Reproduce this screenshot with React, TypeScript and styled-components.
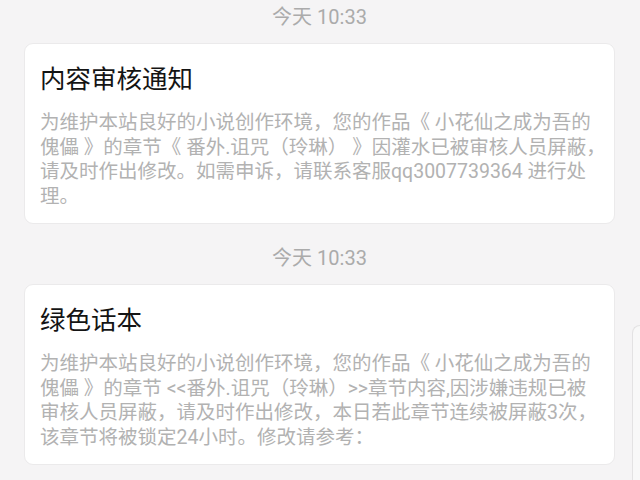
import React from 'react';
import styled, { createGlobalStyle } from 'styled-components';

const GlobalStyle = createGlobalStyle`
  html, body {
    margin: 0;
    padding: 0;
    background: #f5f4f5;
  }
  body {
    font-family: Roboto, 'Noto Sans CJK SC', sans-serif;
    width: 640px;
    height: 480px;
    overflow: hidden;
  }
`;

const Page = styled.div`
  position: relative;
  display: flex;
  flex-direction: column;
  padding: 4px 25px 0 24px;
  height: 480px;
  box-sizing: border-box;
`;

const TimeStamp = styled.div`
  text-align: center;
  font-size: 20px;
  line-height: 26px;
  color: #ababab;
  margin-bottom: 13px;
`;

const Card = styled.div`
  background: #fff;
  border: 1px solid #ebeaeb;
  border-radius: 9px;
  padding: 21px 15px 14px 15px;
  margin-bottom: 21px;
`;

const Title = styled.div`
  font-size: 25.5px;
  line-height: 28px;
  color: #141414;
  margin-bottom: 18px;
`;

const Body = styled.div`
  font-size: 19.5px;
  line-height: 24.5px;
  color: #b2b2b2;
  white-space: nowrap;
`;

const ScrollEdge = styled.div`
  position: absolute;
  right: 0;
  top: 325px;
  bottom: 0;
  width: 7px;
  border-left: 1px solid #e3e2e3;
  border-top: 1px solid #e3e2e3;
  border-top-left-radius: 8px;
  background: #f8f8f8;
`;

type Notice = {
  time: string;
  title: string;
  lines: string[];
};

const notices: Notice[] = [
  {
    time: '今天 10:33',
    title: '内容审核通知',
    lines: [
      '为维护本站良好的小说创作环境，您的作品《 小花仙之成为吾的',
      '傀儡 》的章节《 番外.诅咒（玲琳） 》因灌水已被审核人员屏蔽，',
      '请及时作出修改。如需申诉，请联系客服qq3007739364 进行处',
      '理。',
    ],
  },
  {
    time: '今天 10:33',
    title: '绿色话本',
    lines: [
      '为维护本站良好的小说创作环境，您的作品《 小花仙之成为吾的',
      '傀儡 》的章节 <<番外.诅咒（玲琳）>>章节内容,因涉嫌违规已被',
      '审核人员屏蔽，请及时作出修改，本日若此章节连续被屏蔽3次，',
      '该章节将被锁定24小时。修改请参考：',
    ],
  },
];

export default function App() {
  return (
    <>
      <GlobalStyle />
      <Page>
        {notices.map((n, i) => (
          <React.Fragment key={i}>
            <TimeStamp>{n.time}</TimeStamp>
            <Card>
              <Title>{n.title}</Title>
              <Body>
                {n.lines.map((l, j) => (
                  <div key={j}>{l}</div>
                ))}
              </Body>
            </Card>
          </React.Fragment>
        ))}
        <ScrollEdge />
      </Page>
    </>
  );
}
